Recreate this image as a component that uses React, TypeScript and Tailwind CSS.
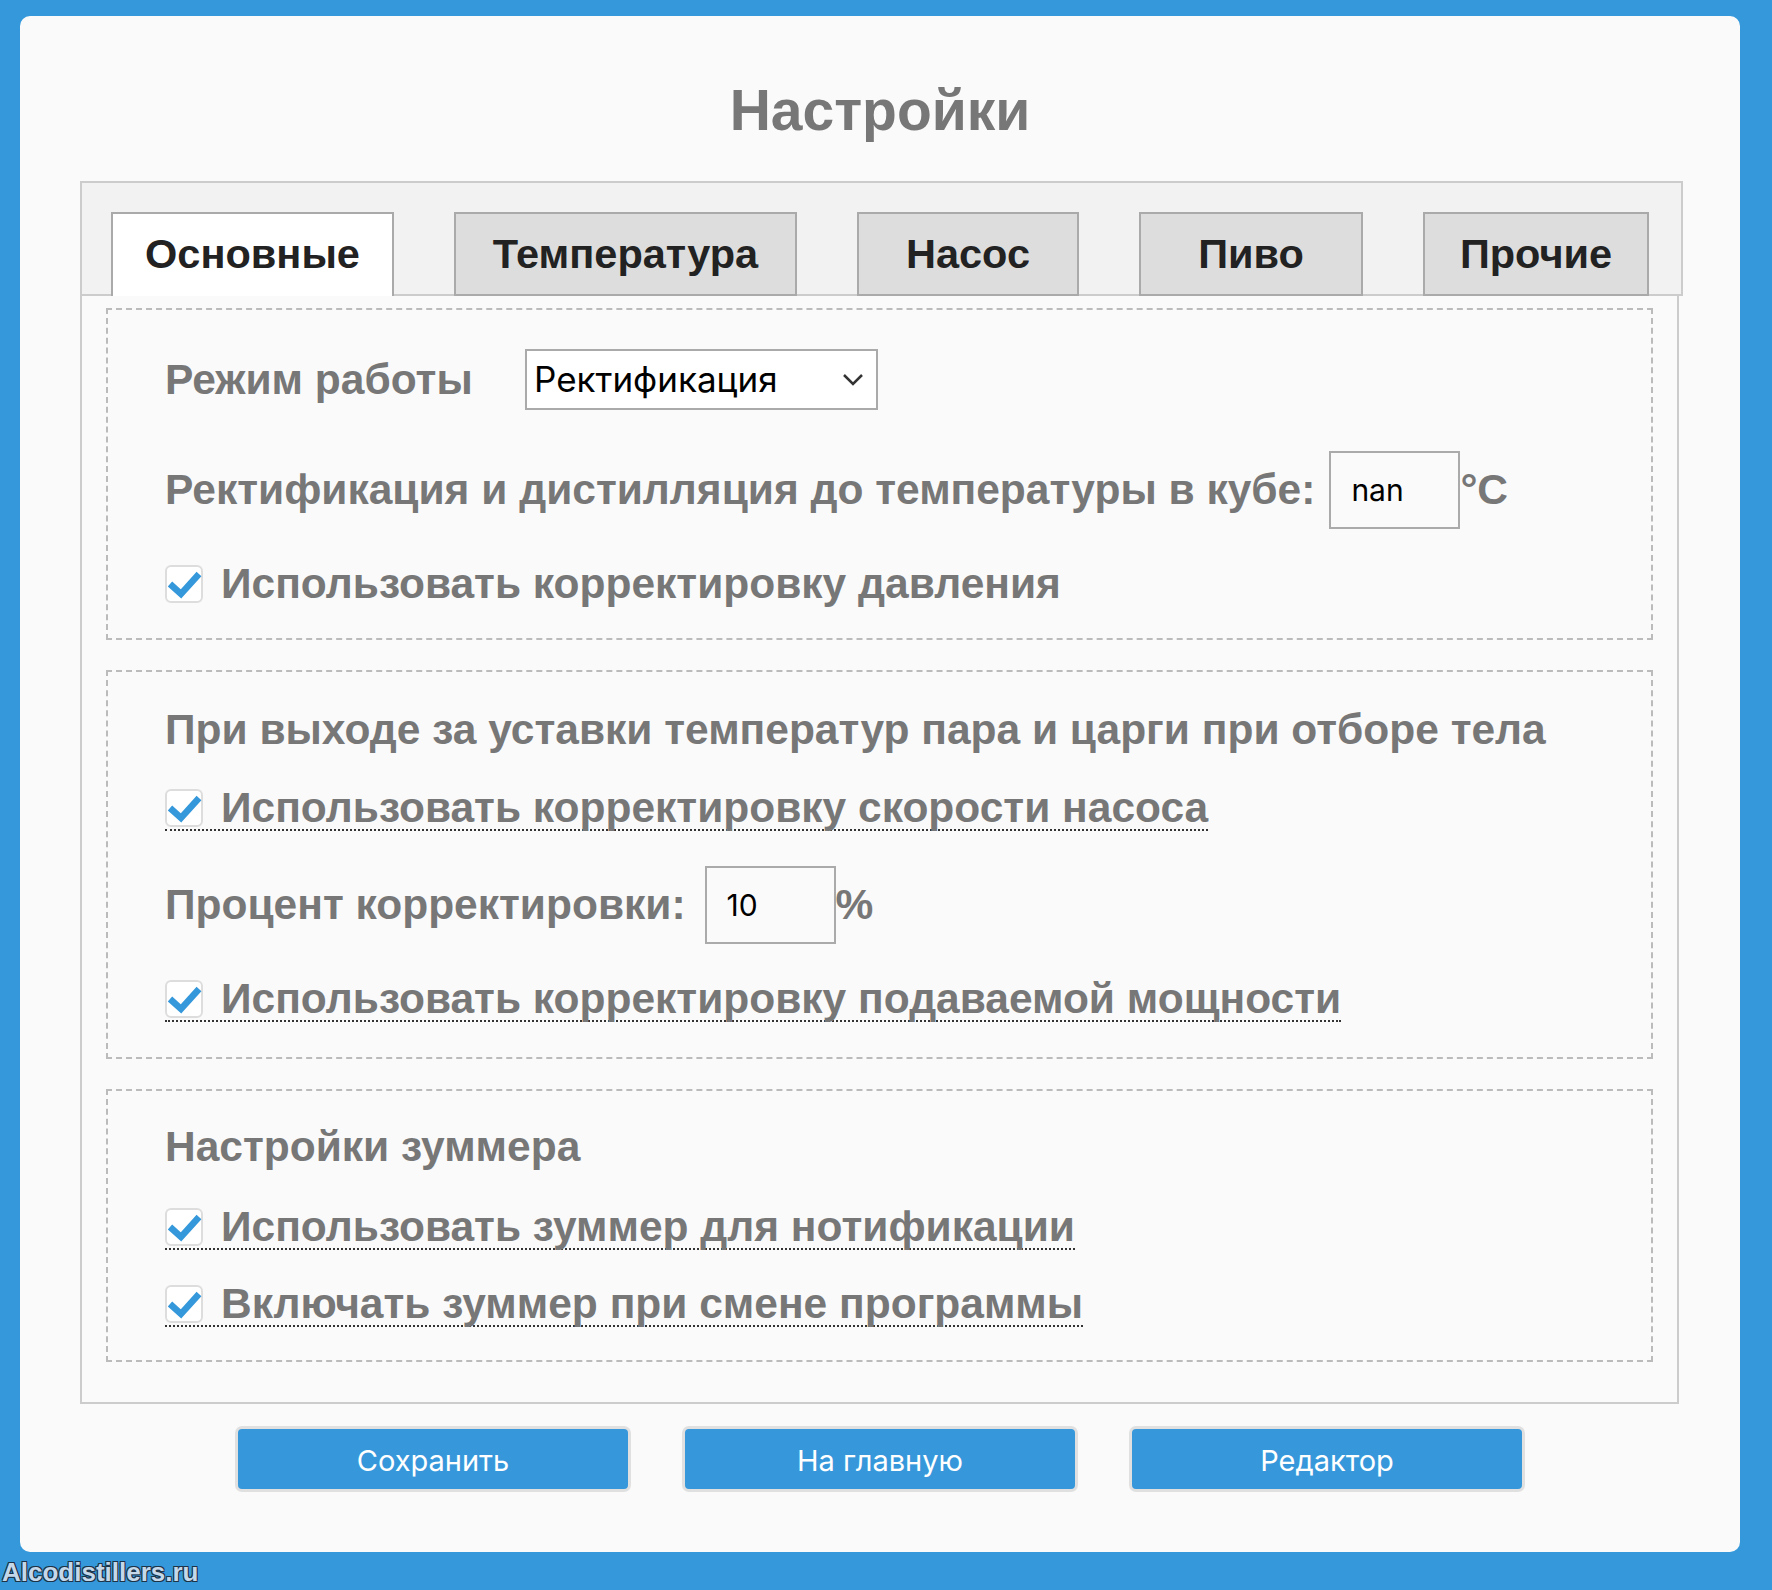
import React from 'react';

const tabs = [
  { label: 'Основные', w: 'w-[283px]', active: true },
  { label: 'Температура', w: 'w-[343px]', active: false },
  { label: 'Насос', w: 'w-[222px]', active: false },
  { label: 'Пиво', w: 'w-[224px]', active: false },
  { label: 'Прочие', w: 'w-[226px]', active: false },
];

const Check: React.FC = () => (
  <div className="relative w-[38px] h-[38px] shrink-0 rounded-[6px] border-2 border-[#dddddd] bg-white">
    <svg className="absolute -left-[2px] -top-[2px]" width="38" height="38" viewBox="0 0 38 38">
      <polyline points="5,19 16,29 34,9" fill="none" stroke="#3498db" strokeWidth="6.5" strokeLinejoin="miter" />
    </svg>
  </div>
);

interface CheckRowProps {
  text: string;
  dotted?: boolean;
  className?: string;
}

const CheckRow: React.FC<CheckRowProps> = ({ text, dotted = true, className = '' }) => (
  <div className={`flex ${className}`}>
    <label
      className={`inline-flex items-center h-[44px] gap-[18px] ${dotted ? 'border-b-2 border-dotted border-[#333]' : ''}`}
    >
      <Check />
      <span className="text-[42.5px] font-bold text-[#777] leading-[44px] whitespace-nowrap">{text}</span>
    </label>
  </div>
);

const Label: React.FC<{ children: React.ReactNode; className?: string }> = ({ children, className = '' }) => (
  <span className={`text-[42.5px] font-bold text-[#777] leading-[46px] whitespace-nowrap ${className}`}>{children}</span>
);

const NumInput: React.FC<{ value: string }> = ({ value }) => (
  <div className="w-[131px] h-[78px] border-2 border-[#aaaaaa] flex items-center pl-[20px] font-['Inter',sans-serif] text-[30px] text-black">
    {value}
  </div>
);

export default function App() {
  return (
    <div className="w-[1772px] min-h-[1590px] bg-[#3498db] pt-[16px] font-['Liberation_Sans',Arial,sans-serif]">
      <div className="ml-[20px] w-[1720px] h-[1536px] bg-[#fafafa] rounded-[10px] flex flex-col">
        <h1 className="pt-[62px] text-center text-[57px] leading-[64px] font-bold text-[#777]">Настройки</h1>

        {/* tab bar */}
        <div className="mt-[39px] ml-[60px] w-[1603px] border-2 border-[#cccccc] bg-[#f2f2f2] pt-[29px] pl-[29px] flex gap-[60px]">
          {tabs.map((t) => (
            <div
              key={t.label}
              className={`${t.w} h-[84px] -mb-[2px] flex items-center justify-center border-2 border-[#aaaaaa] text-[41.5px] font-bold text-[#222] ${
                t.active ? 'bg-white border-b-0 pb-[2px]' : 'bg-[#dddddd]'
              }`}
            >
              {t.label}
            </div>
          ))}
        </div>

        {/* panel */}
        <div className="ml-[60px] w-[1599px] border-2 border-t-0 border-[#cccccc] px-[24px] pt-[12px] pb-[40px] flex flex-col gap-[30px]">
          <div className="h-[332px] border-2 border-dashed border-[#bbbbbb] pl-[57px] pt-[39px] flex flex-col">
            <div className="flex items-center h-[61px]">
              <Label className="w-[360px]">Режим работы</Label>
              <div className="w-[353px] h-[61px] border-2 border-[#aaaaaa] bg-white flex items-center justify-between pl-[7px] pr-[12px] font-['Inter',sans-serif] text-[35px] text-black">
                <span>Ректификация</span>
                <svg width="22" height="14" viewBox="0 0 22 14">
                  <polyline points="2,2 11,11 20,2" fill="none" stroke="#333" strokeWidth="2.5" />
                </svg>
              </div>
            </div>
            <div className="flex items-center h-[78px] mt-[41px]">
              <Label className="mr-[14px]">Ректификация и дистилляция до температуры в кубе:</Label>
              <NumInput value="nan" />
              <Label>°C</Label>
            </div>
            <CheckRow className="mt-[33px]" text="Использовать корректировку давления" dotted={false} />
          </div>

          <div className="h-[389px] border-2 border-dashed border-[#bbbbbb] pl-[57px] pt-[35px] flex flex-col">
            <Label>При выходе за уставки температур пара и царги при отборе тела</Label>
            <CheckRow className="mt-[34px]" text="Использовать корректировку скорости насоса" />
            <div className="flex items-center h-[78px] mt-[35px]">
              <Label className="mr-[19px]">Процент корректировки:</Label>
              <NumInput value="10" />
              <Label>%</Label>
            </div>
            <CheckRow className="mt-[34px]" text="Использовать корректировку подаваемой мощности" />
          </div>

          <div className="h-[273px] border-2 border-dashed border-[#bbbbbb] pl-[57px] pt-[33px] flex flex-col">
            <Label>Настройки зуммера</Label>
            <CheckRow className="mt-[36px]" text="Использовать зуммер для нотификации" />
            <CheckRow className="mt-[33px]" text="Включать зуммер при смене программы" />
          </div>
        </div>

        <div className="mt-[22px] flex justify-center gap-[51px]">
          {['Сохранить', 'На главную', 'Редактор'].map((b) => (
            <button
              key={b}
              className="w-[396px] h-[66px] rounded-[7px] border-[3px] border-[#e0e0e0] bg-[#3698db] text-white font-['Inter',sans-serif] text-[29px] pt-[4px]"
            >
              {b}
            </button>
          ))}
        </div>
      </div>

      <div className="pl-[2px] mt-[6px] text-[26px] leading-[28px] font-bold text-[#c4d8ea] [text-shadow:1px_1px_0_#1c3347,-1px_-1px_0_#1c3347,1px_-1px_0_#1c3347,-1px_1px_0_#1c3347]">
        Alcodistillers.ru
      </div>
    </div>
  );
}
